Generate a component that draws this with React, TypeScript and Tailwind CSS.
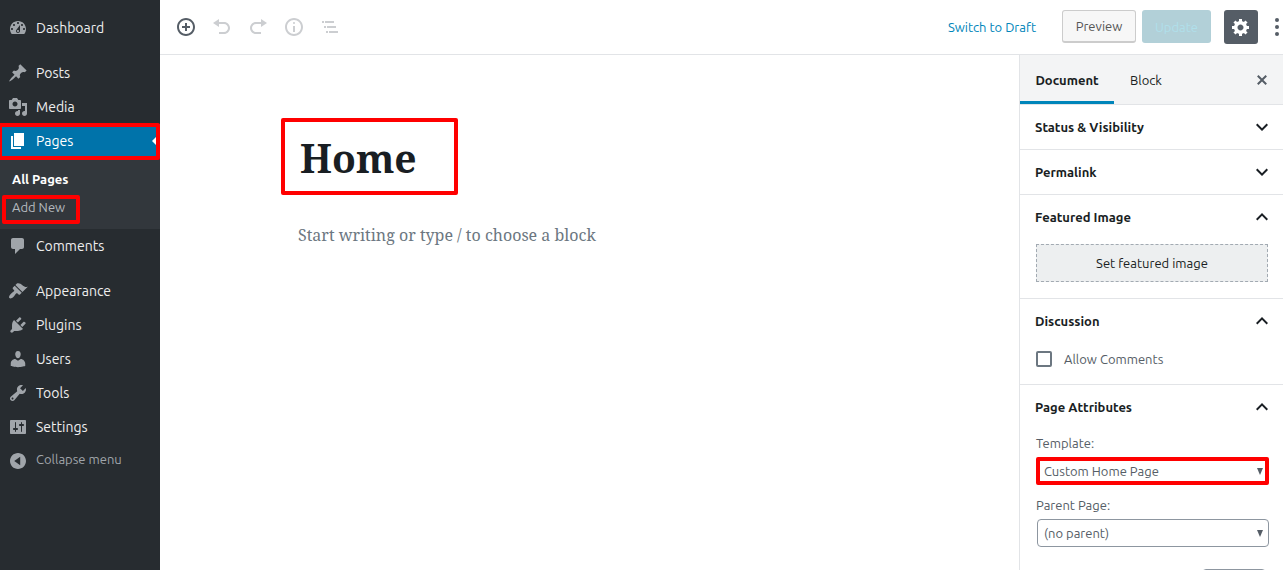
import { useState, type ReactNode } from "react";

const icons = {
  dashboard:
    "M3.76 16h12.48c1.1-1.37 1.76-3.11 1.76-5 0-4.42-3.58-8-8-8s-8 3.58-8 8c0 1.89.66 3.63 1.76 5zM10 4c.55 0 1 .45 1 1s-.45 1-1 1-1-.45-1-1 .45-1 1-1zM6 6c.55 0 1 .45 1 1s-.45 1-1 1-1-.45-1-1 .45-1 1-1zm8 0c.55 0 1 .45 1 1s-.45 1-1 1-1-.45-1-1 .45-1 1-1zm-5.37 5.55L12 7v6c0 1.1-.9 2-2 2s-2-.9-2-2c0-.57.24-1.08.63-1.45zM4 10c.55 0 1 .45 1 1s-.45 1-1 1-1-.45-1-1 .45-1 1-1zm12 0c.55 0 1 .45 1 1s-.45 1-1 1-1-.45-1-1 .45-1 1-1zm-5 3c0-.55-.45-1-1-1s-1 .45-1 1 .45 1 1 1 1-.45 1-1z",
  posts:
    "M10.44 3.02l1.82-1.82 6.36 6.35-1.83 1.82c-1.05-.68-2.48-.57-3.41.36l-.75.75c-.92.93-1.04 2.35-.35 3.41l-1.83 1.82-2.41-2.41-2.8 2.79c-.42.42-3.38 2.71-3.8 2.29s1.86-3.39 2.28-3.81l2.79-2.79L4.1 9.36l1.83-1.82c1.05.69 2.48.57 3.4-.36l.75-.75c.93-.92 1.05-2.35.36-3.41z",
  media:
    "M13 11V4c0-.55-.45-1-1-1h-1.67L9 1H5L3.67 3H2c-.55 0-1 .45-1 1v7c0 .55.45 1 1 1h10c.55 0 1-.45 1-1zM7 4.5c1.38 0 2.5 1.12 2.5 2.5S8.38 9.5 7 9.5 4.5 8.38 4.5 7 5.62 4.5 7 4.5zM14 6h5v10.5c0 1.38-1.12 2.5-2.5 2.5S14 17.88 14 16.5s1.12-2.5 2.5-2.5c.17 0 .34.02.5.05V9h-3V6zm-4 8.05V13h2v3.5c0 1.38-1.12 2.5-2.5 2.5S7 17.88 7 16.5 8.12 14 9.5 14c.17 0 .34.02.5.05z",
  pages: "M6 15V2h10v13H6zm-1 1h8v2H3V5h2v11z",
  comments:
    "M5 2h9c1.1 0 2 .9 2 2v7c0 1.1-.9 2-2 2h-2l-5 5v-5H5c-1.1 0-2-.9-2-2V4c0-1.1.9-2 2-2z",
  appearance:
    "M14.48 11.06L7.41 3.99l1.5-1.5c.5-.56 2.3-.47 3.51.32 1.21.8 1.43 1.28 2.91 2.1 1.18.64 2.45 1.26 4.45.85zm-.71.71L6.7 4.7 4.93 6.47c-.39.39-.39 1.02 0 1.41l1.06 1.06c.39.39.39 1.03 0 1.42-.6.6-1.43 1.11-2.21 1.69-.35.26-.7.53-1.01.84C1.43 14.23.4 16.08 1.4 17.07c.99 1 2.84-.03 4.18-1.36.31-.31.58-.66.85-1.02.57-.78 1.08-1.61 1.69-2.21.39-.39 1.02-.39 1.41 0l1.06 1.06c.39.39 1.02.39 1.41 0z",
  plugins:
    "M13.11 4.36L9.87 7.6 8 5.73l3.24-3.24c.35-.34 1.05-.2 1.56.32.52.51.66 1.21.31 1.55zm-8 1.77l.91-1.12 9.01 9.01-1.19.84c-.71.71-2.63 1.16-3.82 1.16H6.14L4.9 17.26c-.59.59-1.54.59-2.12 0-.59-.58-.59-1.53 0-2.12l1.24-1.24v-3.88c0-1.13.4-3.19 1.09-3.89zm7.26 3.97l3.24-3.24c.34-.35 1.04-.21 1.55.31.52.51.66 1.21.31 1.55l-3.24 3.25z",
  users:
    "M10 9.25c-2.27 0-2.73-3.44-2.73-3.44C7 4.02 7.82 2 9.97 2c2.16 0 2.98 2.02 2.71 3.81 0 0-.41 3.44-2.68 3.44zm0 2.57L12.72 10c2.39 0 4.52 2.33 4.52 4.53v2.49s-3.65 1.13-7.24 1.13c-3.65 0-7.24-1.13-7.24-1.13v-2.49c0-2.25 1.94-4.48 4.47-4.48z",
  tools:
    "M16.68 9.77c-1.34 1.34-3.3 1.67-4.95.99l-5.41 6.52c-.99.99-2.59.99-3.58 0s-.99-2.59 0-3.57l6.52-5.42c-.68-1.65-.35-3.61.99-4.95 1.28-1.28 3.12-1.62 4.72-1.06l-2.89 2.89 2.82 2.82 2.86-2.87c.53 1.58.18 3.39-1.08 4.65zM3.81 16.21c.4.39 1.04.39 1.43 0 .4-.4.4-1.04 0-1.43-.39-.4-1.03-.4-1.43 0-.39.39-.39 1.03 0 1.43z",
  settings:
    "M18 16V4c0-.55-.45-1-1-1H3c-.55 0-1 .45-1 1v12c0 .55.45 1 1 1h14c.55 0 1-.45 1-1zM8 11h1c.55 0 1 .45 1 1s-.45 1-1 1H8v1.5c0 .28-.22.5-.5.5s-.5-.22-.5-.5V13H6c-.55 0-1-.45-1-1s.45-1 1-1h1V5.5c0-.28.22-.5.5-.5s.5.22.5.5V11zm5-2h-1c-.55 0-1-.45-1-1s.45-1 1-1h1V5.5c0-.28.22-.5.5-.5s.5.22.5.5V7h1c.55 0 1 .45 1 1s-.45 1-1 1h-1v5.5c0 .28-.22.5-.5.5s-.5-.22-.5-.5V9z",
  collapse:
    "M10 2c4.42 0 8 3.58 8 8s-3.58 8-8 8-8-3.58-8-8 3.58-8 8-8zm2.2 3.8L6.2 10l6 4.2z",
  insert:
    "M10 1c-5 0-9 4-9 9s4 9 9 9 9-4 9-9-4-9-9-9zm0 16c-3.9 0-7-3.1-7-7s3.1-7 7-7 7 3.1 7 7-3.1 7-7 7zm1-11H9v3H6v2h3v3h2v-3h3V9h-3V6z",
  undo: "M12 5H7V2L1 6l6 4V7h5c2.2 0 4 1.8 4 4s-1.8 4-4 4H7v2h5c3.3 0 6-2.7 6-6s-2.7-6-6-6z",
  redo: "M8 5h5V2l6 4-6 4V7H8c-2.2 0-4 1.8-4 4s1.8 4 4 4h5v2H8c-3.3 0-6-2.7-6-6s2.7-6 6-6z",
  info: "M9 15h2V9H9v6zm1-10c-.5 0-1 .5-1 1s.5 1 1 1 1-.5 1-1-.5-1-1-1zm0-4c-5 0-9 4-9 9s4 9 9 9 9-4 9-9-4-9-9-9zm0 16c-3.9 0-7-3.1-7-7s3.1-7 7-7 7 3.1 7 7-3.1 7-7 7z",
  outline:
    "M2 4h2v2H2zM5 4h9v2H5zM4 9h2v2H4zM7 9h9v2H7zM6 14h2v2H6zM9 14h9v2H9z",
  gear: "M18 12h-2.18c-.17.7-.44 1.35-.81 1.93l1.54 1.54-2.1 2.1-1.54-1.54c-.58.36-1.23.63-1.91.79V19H8v-2.18c-.68-.16-1.33-.43-1.91-.79l-1.54 1.54-2.12-2.12 1.54-1.54c-.36-.58-.63-1.23-.79-1.91H1V9.03h2.17c.16-.7.44-1.35.8-1.94L2.43 5.55l2.1-2.1 1.54 1.54c.58-.37 1.24-.64 1.93-.81V2h3v2.18c.68.16 1.33.43 1.91.79l1.54-1.54 2.12 2.12-1.54 1.54c.36.59.64 1.24.8 1.94H18V12zm-8.5 1.5c1.66 0 3-1.34 3-3s-1.34-3-3-3-3 1.34-3 3 1.34 3 3 3z",
  close:
    "M14.95 6.46L11.41 10l3.54 3.54-1.41 1.41L10 11.42l-3.53 3.53-1.42-1.42L8.58 10 5.05 6.47l1.42-1.42L10 8.58l3.54-3.53z",
};

type IconName = keyof typeof icons;

function Icon({ name }: { name: IconName }) {
  return (
    <svg viewBox="0 0 20 20" className="size-5 shrink-0 fill-current" fillRule="evenodd" aria-hidden="true">
      <path d={icons[name]} />
    </svg>
  );
}

function MenuItem({ icon, label }: { icon: IconName; label: string }) {
  return (
    <li>
      <a href="#" className="flex h-[34px] items-center gap-2 px-2 text-sm text-[#eee]">
        <span className="text-[#a0a5aa]">
          <Icon name={icon} />
        </span>
        {label}
      </a>
    </li>
  );
}

function AdminMenu() {
  return (
    <nav aria-label="Main menu" className="w-40 shrink-0 bg-[#272c30] pt-[11px]">
      <ul>
        <MenuItem icon="dashboard" label="Dashboard" />
      </ul>
      <ul className="mt-[11px]">
        <MenuItem icon="posts" label="Posts" />
        <MenuItem icon="media" label="Media" />
        <li>
          <a href="#" className="relative flex h-[34px] items-center gap-2 bg-[#0073aa] px-2 text-sm text-white">
            <Icon name="pages" />
            Pages
            <svg viewBox="0 0 8 16" className="absolute top-[9px] right-0 h-4 w-2 fill-white" aria-hidden="true">
              <path d="M8 0v16L0 8z" />
            </svg>
            <span className="absolute -top-px right-0 -bottom-0.5 -left-0.5 rounded-xs border-4 border-[#f00]" />
          </a>
          <ul className="bg-[#32373c] pt-2 pb-[7px] text-[13px]">
            <li>
              <a href="#" className="flex h-7 items-center px-3 font-bold text-white">
                All Pages
              </a>
            </li>
            <li>
              <a href="#" className="relative flex h-7 w-20 items-center px-3 text-[#b4b9be]">
                Add New
                <span className="absolute top-px right-0 -bottom-0.5 left-0.5 rounded-xs border-4 border-[#f00]" />
              </a>
            </li>
          </ul>
        </li>
        <MenuItem icon="comments" label="Comments" />
      </ul>
      <ul className="mt-[11px]">
        <MenuItem icon="appearance" label="Appearance" />
        <MenuItem icon="plugins" label="Plugins" />
        <MenuItem icon="users" label="Users" />
        <MenuItem icon="tools" label="Tools" />
        <MenuItem icon="settings" label="Settings" />
      </ul>
      <button type="button" className="flex h-[34px] items-center gap-2 px-2 text-[13px] text-[#a0a5aa]">
        <Icon name="collapse" />
        <span className="pb-0.5">Collapse menu</span>
      </button>
    </nav>
  );
}

function ToolButton({ icon, label, disabled }: { icon: IconName; label: string; disabled?: boolean }) {
  return (
    <button
      type="button"
      aria-label={label}
      disabled={disabled}
      className="flex size-9 items-center justify-center text-[#555d66] disabled:text-[#ccced1]"
    >
      <Icon name={icon} />
    </button>
  );
}

function Header() {
  return (
    <header className="flex h-[55px] shrink-0 items-center border-b border-[#e2e4e7] pl-2 text-[13px]">
      <div className="flex flex-1">
        <ToolButton icon="insert" label="Add block" />
        <ToolButton icon="undo" label="Undo" disabled />
        <ToolButton icon="redo" label="Redo" disabled />
        <ToolButton icon="info" label="Content structure" disabled />
        <ToolButton icon="outline" label="Block navigation" disabled />
      </div>
      <button type="button" className="mr-[26px] pt-0.5 text-[#0085ba]">
        Switch to Draft
      </button>
      <div className="flex h-[34px] items-start">
        <button
          type="button"
          className="mr-1.5 h-[33px] w-[74px] rounded-[3px] border border-b-2 border-[#ccc] bg-[#f7f7f7] pt-0.5 text-[#555]"
        >
          Preview
        </button>
        <button type="button" className="mr-[13px] h-[33px] w-[69px] rounded-[3px] bg-[#b2d0d8] pt-0.5 text-[#b0dfea]">
          Update
        </button>
        <button
          type="button"
          aria-label="Settings"
          className="flex size-[34px] items-center justify-center rounded-[3px] bg-[#555d66] text-white"
        >
          <Icon name="gear" />
        </button>
      </div>
      <button type="button" aria-label="More tools" className="flex h-9 w-[25px] items-center justify-end pr-1 text-[#555d66]">
        <svg viewBox="0 0 4 20" className="h-5 w-1 fill-current" aria-hidden="true">
          <circle cx="2" cy="3" r="2" />
          <circle cx="2" cy="10" r="2" />
          <circle cx="2" cy="17" r="2" />
        </svg>
      </button>
    </header>
  );
}

function Panel({ title, initialOpen, children }: { title: string; initialOpen?: boolean; children?: ReactNode }) {
  const [open, setOpen] = useState(Boolean(initialOpen));
  return (
    <section className="border-b border-[#e2e4e7]">
      <h2>
        <button
          type="button"
          aria-expanded={open}
          onClick={() => setOpen(!open)}
          className="flex h-11 w-full items-center justify-between pr-[9px] pl-[15px] font-bold text-[#191e23]"
        >
          <span className="pt-0.5">{title}</span>
          <svg viewBox="0 0 24 24" className="size-6 fill-current" aria-hidden="true">
            {open ? (
              <path d="M12 8l-6 6 1.41 1.41L12 10.83l4.59 4.58L18 14z" />
            ) : (
              <path d="M7.41 8.59L12 13.17l4.59-4.58L18 10l-6 6-6-6z" />
            )}
          </svg>
        </button>
      </h2>
      {open && children}
    </section>
  );
}

function SelectField({ id, label, options, marked }: { id: string; label: string; options: string[]; marked?: boolean }) {
  return (
    <div>
      <label htmlFor={id} className="block h-5 leading-5">
        {label}
      </label>
      <div className="relative mt-1 pl-px">
        <select
          id={id}
          className="block h-7 w-full appearance-none rounded-sm border border-[#8d96a0] bg-white pt-0.5 pr-6 pl-1.5 text-[#555d66]"
        >
          {options.map((option) => (
            <option key={option}>{option}</option>
          ))}
        </select>
        <svg viewBox="0 0 6 7" className="pointer-events-none absolute top-[11px] right-1.5 h-[7px] w-1.5 fill-[#555d66]" aria-hidden="true">
          <path d="M0 0h6L3 7z" />
        </svg>
        {marked && <span className="pointer-events-none absolute inset-0 rounded-xs border-4 border-[#f00]" />}
      </div>
    </div>
  );
}

function DocumentSidebar() {
  return (
    <aside className="w-[264px] shrink-0 overflow-hidden border-l border-[#e2e4e7] text-[13px] text-[#555d66]">
      <div className="flex h-[50px] border-b border-[#e2e4e7] bg-[#f3f4f5] pr-[11px] text-[#191e23]">
        <button type="button" className="w-[94px] border-b-[3px] border-[#0085ba] pt-[5px] font-bold">
          Document
        </button>
        <button type="button" className="px-4 pt-0.5">
          Block
        </button>
        <button type="button" aria-label="Close settings" className="ml-auto text-[#555d66]">
          <Icon name="close" />
        </button>
      </div>
      <Panel title="Status &amp; Visibility" />
      <Panel title="Permalink" />
      <Panel title="Featured Image" initialOpen>
        <div className="pt-[5px] pr-[15px] pb-4 pl-4">
          <button
            type="button"
            className="block h-[38px] w-full border border-dashed border-[#a2aab2] bg-[#edeff0] pt-0.5 text-[#191e23]"
          >
            Set featured image
          </button>
        </div>
      </Panel>
      <Panel title="Discussion" initialOpen>
        <div className="flex h-[41px] items-start px-4 pt-1.5">
          <label className="flex h-5 items-center gap-3">
            <input
              type="checkbox"
              className="size-4 appearance-none rounded-xs border-2 border-[#6c7781] bg-white checked:bg-[#11a0d2]"
            />
            <span className="pt-0.5">Allow Comments</span>
          </label>
        </div>
      </Panel>
      <Panel title="Page Attributes" initialOpen>
        <div className="flex flex-col gap-[10px] pt-1 pr-[14px] pb-4 pl-4">
          <SelectField id="template" label="Template:" options={["Custom Home Page", "Default template"]} marked />
          <SelectField id="parent" label="Parent Page:" options={["(no parent)"]} />
          <input
            type="number"
            aria-label="Order"
            className="mt-3 mr-[3px] h-7 w-16 self-end rounded-sm border border-[#8d96a0] px-2"
          />
        </div>
      </Panel>
    </aside>
  );
}

export default function App() {
  return (
    <div className="flex h-screen overflow-hidden bg-white font-['Ubuntu','Noto_Sans',sans-serif]">
      <AdminMenu />
      <div className="flex min-w-0 flex-1 flex-col">
        <Header />
        <div className="flex min-h-0 flex-1">
          <main className="min-w-0 flex-1 pt-[63px] pl-[121px] font-['Noto_Serif','Droid_Serif','DejaVu_Serif',serif]">
            <input
              aria-label="Title"
              defaultValue="Home"
              className="block h-[77px] w-[177px] rounded-xs border-4 border-[#f00] px-[15px] pt-0.5 text-[39px] font-bold text-[#191e23]"
            />
            <input
              aria-label="Content"
              placeholder="Start writing or type / to choose a block"
              className="mt-[26px] ml-[17px] block h-7 w-[610px] max-w-full text-base placeholder:text-[#6c7781]"
            />
          </main>
          <DocumentSidebar />
        </div>
      </div>
    </div>
  );
}
